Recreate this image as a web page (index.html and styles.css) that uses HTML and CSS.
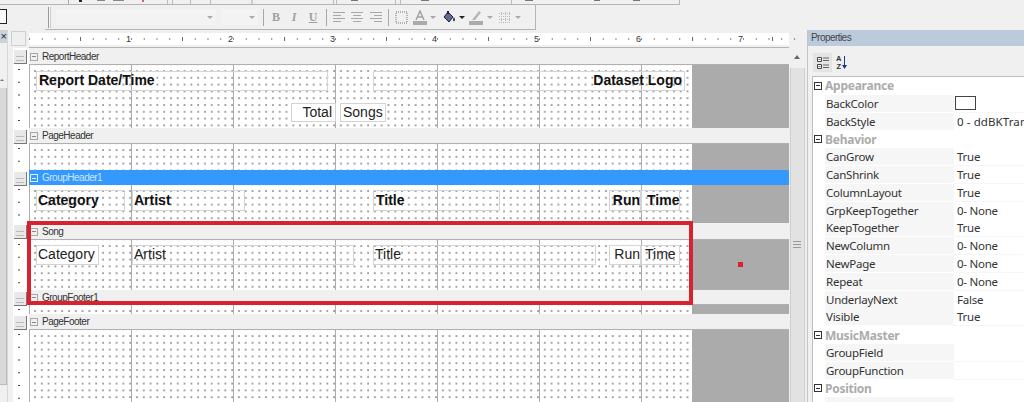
FILE: index.html
```html
<!DOCTYPE html>
<html lang="en">
<head>
<meta charset="utf-8">
<title>Report Designer</title>
<link rel="stylesheet" href="styles.css">
</head>
<body>
<div class="app">
  <div class="strip">
    <svg class="strip-marks" width="680" height="5" viewBox="0 0 680 5"><path d="M68.500 0v4M252 0v4" stroke="#aaa"/><path d="M79 0h3v2h-3z" fill="#223"/><path d="M97 0h8v1h-8zM113 0h11v1h-11z" fill="#888"/><path d="M142 0h2v2h-2z" fill="#c66"/><path d="M167.500 0v4M172.500 0v4M190.500 0v4M210.500 0v4M333.500 0v4M336.500 0v4M395.500 0v4M400.500 0v4M511.500 0v4" stroke="#bbb"/><path d="M351 0h7v1h-7zM421 0h8v1h-8zM525 0h8v1h-8zM594 0h6v1h-6zM633 0h7v1h-7z" fill="#777"/></svg>
  </div>
  <div class="tools">
    <div class="edge"><span class="edge-box"></span></div>
    <div class="toolbar">
      <span class="grip"></span>
      <span class="combo font-combo"><i class="arrow"></i></span>
      <span class="combo size-combo"><i class="arrow"></i></span>
      <span class="sep"></span>
      <span class="tb tb-b">B</span><span class="tb tb-i">I</span><span class="tb tb-u">U</span>
      <span class="sep sep-b"></span>
      <svg class="ic al-1" width="14" height="12" viewBox="0 0 14 12"><path d="M1 1.500h12M1 4.500h8M1 7.500h12M1 10.500h8" stroke="#a8a8a8"/></svg>
      <svg class="ic al-2" width="14" height="12" viewBox="0 0 14 12"><path d="M1 1.500h12M3 4.500h8M1 7.500h12M3 10.500h8" stroke="#a8a8a8"/></svg>
      <svg class="ic al-3" width="14" height="12" viewBox="0 0 14 12"><path d="M1 1.500h12M5 4.500h8M1 7.500h12M5 10.500h8" stroke="#a8a8a8"/></svg>
      <span class="sep sep-c"></span>
      <svg class="ic ic-bd" width="13" height="13" viewBox="0 0 13 13"><rect x="1" y="1" width="11" height="11" fill="none" stroke="#777" stroke-dasharray="1 1"/></svg>
      <svg class="ic ic-a" width="14" height="15" viewBox="0 0 14 15"><path d="M3 10 7 1l4 9M4.500 7h5" fill="none" stroke="#a0a0a0" stroke-width="1.400"/><rect y="11" width="14" height="4" fill="#aaa"/></svg>
      <i class="arrow ar"></i>
      <svg class="ic ic-f" width="13" height="13" viewBox="0 0 13 13"><path d="M1 6 5 1l5 5-4 5z" fill="#5d6c92" stroke="#223"/><path d="M4 0h2v3H4z" fill="#223"/><path d="M11 6q2 3 0 4.500-2-1.500 0-4.500" fill="#333"/></svg>
      <i class="arrow ar dark"></i>
      <svg class="ic ic-p" width="14" height="15" viewBox="0 0 14 15"><path d="M3 10 10 1l2 1.500L6 10z" fill="#b5b5b5"/><rect y="11" width="14" height="4" fill="#aaa"/></svg>
      <i class="arrow ar ar-p"></i>
      <svg class="ic ic-t" width="12" height="11" viewBox="0 0 12 11"><path d="M0 1.500h12M0 4.500h12M0 7.500h12M0 10.500h12M2.500 0v11M6.500 0v11M10.500 0v11" stroke="#bbb" stroke-dasharray="1 1"/></svg>
      <i class="arrow ar ar-t"></i>
    </div>
  </div>
  <div class="work">
    <div class="side">
      <span class="side-close">×</span>
      <span class="side-up"></span>
      <span class="side-thumb"></span>
    </div>
    <div class="designer">
      <div class="ruler-row">
        <span class="corner"></span>
        <div class="ruler">
          <span class="inch">1</span><span class="inch">2</span><span class="inch">3</span><span class="inch">4</span><span class="inch">5</span><span class="inch">6</span><span class="inch">7</span><span class="inch inch-last"></span>
        </div>
      </div>
      <div class="gap-row"></div>

      <section class="sec">
        <div class="bar h17"><span class="handle"></span><div class="bar-in"><span class="minus"></span>ReportHeader</div></div>
        <div class="body h63"><span class="vr"></span><div class="paper">
          <div class="ctl rh-a bold">Report Date/Time</div>
          <div class="ctl rh-b bold right">Dataset Logo</div>
          <div class="ctl rh-c white right">Total</div>
          <div class="ctl rh-d white">Songs</div>
        </div><div class="gray"></div></div>
      </section>

      <section class="sec">
        <div class="bar h16"><span class="handle"></span><div class="bar-in"><span class="minus"></span>PageHeader</div></div>
        <div class="body h26"><span class="vr"></span><div class="paper"></div><div class="gray"></div></div>
      </section>

      <section class="sec">
        <div class="bar h15"><span class="handle"></span><div class="bar-in selected"><span class="minus minus-on"></span>GroupHeader1</div></div>
        <div class="body h38"><span class="vr"></span><div class="paper">
          <div class="ctl gh-a bold">Category</div>
          <div class="ctl gh-b bold">Artist</div>
          <div class="ctl gh-c bold">Title</div>
          <div class="ctl gh-d bold right">Run</div>
          <div class="ctl gh-e bold">Time</div>
        </div><div class="gray"></div></div>
      </section>

      <section class="sec">
        <div class="bar h17"><span class="handle"></span><div class="bar-in"><span class="minus"></span>Song</div></div>
        <div class="body h50"><span class="vr"></span><div class="paper">
          <div class="ctl so-a white">Category</div>
          <div class="ctl so-b">Artist</div>
          <div class="ctl so-c">Title</div>
          <div class="ctl so-d white right">Run</div>
          <div class="ctl so-e">Time</div>
        </div><div class="gray"><span class="red-dot"></span></div></div>
      </section>

      <section class="sec">
        <div class="bar h15"><span class="handle"></span><div class="bar-in"><span class="minus"></span>GroupFooter1</div></div>
        <div class="body h9"><span class="vr"></span><div class="paper"></div><div class="gray"></div></div>
      </section>

      <section class="sec">
        <div class="bar h16"><span class="handle"></span><div class="bar-in"><span class="minus"></span>PageFooter</div></div>
        <div class="body h72"><span class="vr"></span><div class="paper"></div><div class="gray"></div></div>
      </section>

      <div class="highlight"></div>
    </div>
    <div class="vscroll">
      <span class="v-up"></span>
      <span class="v-thumb"></span>
      <span class="v-grip"></span>
    </div>
    <div class="props">
      <div class="props-title">Properties</div>
      <div class="props-tools">
        <span class="pt pt-on"><svg width="14" height="14" viewBox="0 0 14 14"><path d="M1.500 1.500h4v4h-4zM1.500 8.500h4v4h-4z" fill="#fff" stroke="#444"/><path d="M2.500 3.500h2M2.500 10.500h2M7 2h6M7 4.500h6M7 9h6M7 11.500h6" stroke="#666"/></svg></span>
        <span class="pt pt-az"><span class="az">A<br>Z</span><svg width="5" height="14" viewBox="0 0 5 14"><path d="M2.500 0v11" stroke="#1e3a7a"/><path d="M0 9h5l-2.500 4z" fill="#1e3a7a"/></svg></span>
      </div>
      <div class="grid">
        <div class="cat"><span class="box"></span>Appearance</div>
        <div class="row"><span class="k">BackColor</span><span class="v"><i class="swatch"></i></span></div>
        <div class="row"><span class="k">BackStyle</span><span class="v wide">0 - ddBKTransparent</span></div>
        <div class="cat"><span class="box"></span>Behavior</div>
        <div class="row"><span class="k">CanGrow</span><span class="v">True</span></div>
        <div class="row"><span class="k">CanShrink</span><span class="v">True</span></div>
        <div class="row"><span class="k">ColumnLayout</span><span class="v">True</span></div>
        <div class="row"><span class="k">GrpKeepTogether</span><span class="v">0- None</span></div>
        <div class="row"><span class="k">KeepTogether</span><span class="v">True</span></div>
        <div class="row"><span class="k">NewColumn</span><span class="v">0- None</span></div>
        <div class="row"><span class="k">NewPage</span><span class="v">0- None</span></div>
        <div class="row"><span class="k">Repeat</span><span class="v">0- None</span></div>
        <div class="row"><span class="k">UnderlayNext</span><span class="v">False</span></div>
        <div class="row"><span class="k">Visible</span><span class="v">True</span></div>
        <div class="cat"><span class="box"></span>MusicMaster</div>
        <div class="row"><span class="k">GroupField</span><span class="v"></span></div>
        <div class="row"><span class="k">GroupFunction</span><span class="v"></span></div>
        <div class="cat"><span class="box"></span>Position</div>
        <div class="row"><span class="k">Left</span><span class="v"></span></div>
      </div>
    </div>
  </div>
</div>
</body>
</html>
```
FILE: styles.css
```css
* { box-sizing: border-box; }
html, body { margin: 0; padding: 0; background: #f0f0f0; }
.app { width: 1024px; height: 402px; overflow: hidden; position: relative; display: flex; flex-direction: column; font-family: "Liberation Sans", Arial, sans-serif; color: #222; }

/* top toolbars */
.strip { height: 5px; flex: none; width: 680px; border-bottom: 1px solid #b5b5b5; border-right: 1px solid #b5b5b5; overflow: hidden; }
.strip-marks { display: block; }
.tools { height: 25px; flex: none; display: flex; }
.edge { width: 45px; flex: none; }
.edge-box { display: block; width: 7px; height: 15px; margin-top: 4px; border: 1px solid #222; border-left: 0; background: #fafafa; }
.toolbar { width: 491px; flex: none; display: flex; align-items: center; border-right: 1px solid #b5b5b5; border-bottom: 1px solid #b5b5b5; padding-left: 3px; }
.grip { width: 3px; height: 21px; flex: none; border-left: 1px solid #999; border-right: 1px solid #ccc; background: #f8f8f8; margin-right: 5px; }
.combo { height: 16px; flex: none; background: #f3f3f3; display: flex; align-items: center; justify-content: flex-end; padding-right: 3px; }
.font-combo { width: 160px; }
.size-combo { width: 37px; margin-left: 5px; }
.arrow { display: block; flex: none; width: 0; height: 0; border: 3px solid transparent; border-top: 3px solid #aaa; border-bottom: 0; }
.sep { width: 1px; height: 17px; flex: none; background: #a8a8a8; margin-left: 5px; }
.tb { width: 10px; flex: none; font: bold 12px "Liberation Serif", serif; color: #a0a0a0; text-align: center; }
.tb-b { margin-left: 7px; }
.tb-i { margin-left: 8px; font-style: italic; }
.tb-u { margin-left: 9px; text-decoration: underline; }
.sep-b { margin-left: 8px; }
.ic { display: block; flex: none; }
.al-1 { margin-left: 5px; }
.al-2 { margin-left: 4px; }
.al-3 { margin-left: 5px; }
.sep-c { margin-left: 5px; }
.ic-bd { margin-left: 6px; }
.ic-a { margin-left: 5px; }
.ar { margin-left: 3px; }
.dark { border-top-color: #222; }
.ic-f { margin-left: 7px; }
.ic-p { margin-left: 4px; }
.ar-p { margin-left: 4px; }
.ic-t { margin-left: 6px; }
.ar-t { margin-left: 4px; }

/* workspace */
.work { flex: 1; display: flex; min-height: 0; }
.side { width: 8px; flex: none; position: relative; border-right: 1px solid #d8d8d8; }
.side-close { display: block; width: 7px; height: 13px; background: #c9d3de; font: 11px/12px "Liberation Sans", sans-serif; color: #222; text-align: right; }
.side-up { position: absolute; left: 0; top: 47px; border: 2px solid transparent; border-bottom: 2px solid #777; }
.side-thumb { position: absolute; left: 0; top: 58px; width: 7px; height: 297px; background: #d9d9d9; border-right: 1px solid #bbb; border-bottom: 1px solid #bbb; }
.designer { width: 781px; flex: none; position: relative; }

/* ruler */
.ruler-row { height: 15px; display: flex; padding-left: 3px; }
.corner { width: 15px; height: 15px; margin-top: 1px; background: #efefef; border: 1px solid #cfcfcf; }
.ruler { margin-left: 3px; margin-top: 3px; height: 12px; width: 760px; background: #fff; display: flex; }
.inch { width: 102px; flex: none; font: 9px/12px "Liberation Sans", sans-serif; color: #333; text-align: right;
  background:
    linear-gradient(#666, #666) 50% 50% / 1px 4px no-repeat,
    linear-gradient(to right, #888 1px, transparent 1px) 0 50% / 12.750px 2px repeat-x;
}
.inch-last { width: 58px; }
.gap-row { height: 3px; border-bottom: 1px solid #b5b5b5; margin-left: 21px; }

/* bands */
.bar { display: flex; }
.h17 { height: 17px; } .h16 { height: 16px; } .h15 { height: 15px; }
.h63 { height: 63px; } .h26 { height: 26px; } .h38 { height: 38px; } .h50 { height: 50px; } .h9 { height: 9px; } .h72 { height: 72px; }
.handle { width: 21px; flex: none; position: relative; background: linear-gradient(to right, transparent 5px, #fff 5px); }
.handle::after { content: ""; position: absolute; left: 6px; top: 2px; width: 12px; height: 13px; background: repeating-linear-gradient(#e8e8e8 0 3px, #bbb 3px 4px) 2px 3px / 8px 8px no-repeat, #e8e8e8; border-right: 1px solid #777; border-bottom: 1px solid #777; }
.bar-in { flex: 1; background: #f0f0f0; font: 10px/16px "Liberation Sans", sans-serif; letter-spacing: -.5px; color: #333; border-bottom: 1px solid #b0b0b0; display: flex; align-items: center; padding-top: 1px; }
.bar-in.selected { background: #3399ff; color: #cfe5ff; border-bottom: 0; }
.minus { width: 8px; height: 8px; margin: 0 4px 0 1px; border: 1px solid #a8a8a8; background: linear-gradient(#888, #888) 50% 50% / 4px 1px no-repeat; flex: none; }
.minus-on { border-color: #e4f0ff; background: linear-gradient(#e4f0ff, #e4f0ff) 50% 50% / 4px 1px no-repeat; }
.body { display: flex; }
.vr { width: 21px; flex: none;
  background:
    linear-gradient(#444 1px, transparent 1px) 10px 4px / 2px 12.750px repeat-y,
    linear-gradient(to right, transparent 5px, #fff 5px);
}
.paper { width: 663px; flex: none; position: relative; overflow: hidden;
  background:
    linear-gradient(to right, #acacac 1.500px, transparent 1.500px) 0 0 / 102px 100% repeat-x,
    radial-gradient(circle at 1px 1px, #777 .55px, transparent .95px) 5px 5px / 6.800px 6.800px,
    #fff;
}
.gray { flex: 1; background: #ababab; position: relative; }
.red-dot { position: absolute; left: 46px; top: 22px; width: 5px; height: 5px; background: #d8232e; }

/* report controls on the free canvas of a band */
.ctl { position: absolute; border: 1px solid #d4d4d4; font-size: 14px; line-height: 17px; color: #222; white-space: nowrap; padding-left: 1px; }
.bold { font-weight: bold; color: #111; }
.right { text-align: right; padding-right: 2px; padding-left: 0; }
.white { background: #fff; }
.rh-a { left: 7px; top: 6px; width: 292px; height: 20px; padding-left: 2px; }
.rh-b { left: 344px; top: 6px; width: 312px; height: 20px; }
.rh-c { left: 262px; top: 38px; width: 45px; height: 19px; padding-right: 3px; }
.rh-d { left: 311px; top: 38px; width: 46px; height: 19px; padding-left: 2px; }
.gh-a { left: 7px; top: 5px; width: 89px; height: 21px; line-height: 19px; }
.gh-b { left: 103px; top: 5px; width: 113px; height: 21px; line-height: 19px; }
.gh-c { left: 344px; top: 5px; width: 127px; height: 21px; padding-left: 2px; line-height: 19px; }
.gh-d { left: 580px; top: 5px; width: 32px; height: 21px; line-height: 19px; padding-right: 0; }
.gh-e { left: 612px; top: 5px; width: 39px; height: 21px; padding-left: 5px; line-height: 19px; }
.so-a { left: 7px; top: 5px; width: 63px; height: 20px; padding-left: 1px; }
.so-b { left: 103px; top: 5px; width: 222px; height: 20px; }
.so-c { left: 344px; top: 5px; width: 223px; height: 20px; padding-left: 1px; }
.so-d { left: 580px; top: 5px; width: 32px; height: 20px; padding-right: 0; }
.so-e { left: 612px; top: 5px; width: 39px; height: 20px; padding-left: 3px; }

.highlight { position: absolute; left: 19px; top: 191px; width: 666px; height: 84px; border: 4px solid #d8232e; }

/* vertical scrollbar */
.vscroll { width: 19px; flex: none; position: relative; border-right: 1px solid #c4c4c4; }
.v-up { position: absolute; left: 5px; top: 25px; border: 3px solid transparent; border-bottom: 4px solid #666; border-top: 0; }
.v-thumb { position: absolute; left: 1px; top: 38px; width: 15px; height: 340px; background: #e2e2e2; border-left: 1px solid #cfcfcf; border-right: 1px solid #cfcfcf; }
.v-grip { position: absolute; left: 4px; top: 211px; width: 8px; height: 9px; background: repeating-linear-gradient(#999 0 1px, transparent 1px 3px); }

/* properties */
.props { flex: 1; min-width: 0; }
.props-title { height: 16px; background: #bccbd9; font: 10px/15px "Liberation Sans", sans-serif; letter-spacing: -.55px; color: #445; padding-left: 3px; }
.props-tools { height: 30px; padding: 7px 0 0 5px; display: flex; gap: 4px; }
.pt { height: 19px; display: flex; align-items: center; }
.pt-on { width: 19px; background: #e4e4e4; justify-content: center; }
.pt-az { gap: 1px; }
.az { font: bold 7.500px/7.500px "Liberation Sans", sans-serif; color: #333; text-align: center; }
.grid { margin-left: 4px; background: #fff; border-left: 1px solid #bdbdbd; border-top: 1px solid #bdbdbd; height: 326px; font: 11.500px/17px "Noto Sans", "Liberation Sans", sans-serif; letter-spacing: -.25px; color: #333; }
.cat { height: 17.800px; display: flex; align-items: center; font-weight: bold; font-size: 12px; color: #ababab; white-space: nowrap; background: #fff; padding-left: 1px; }
.box { width: 8px; height: 8px; margin-right: 3px; border: 1px solid #333; background: linear-gradient(#333, #333) 50% 50% / 4px 1px no-repeat; flex: none; }
.row { height: 17.800px; display: grid; grid-template-columns: 129px 1fr; margin-left: 12px; white-space: nowrap; overflow: hidden; }
.k { background: #f6f6f6; padding-left: 1px; border-bottom: 1px solid #fff; }
.v { padding-left: 3px; border-bottom: 1px solid #f6f6f6; }
.wide { letter-spacing: .1px; }
.swatch { display: block; width: 21px; height: 14px; margin: 1px 0 0 -2px; border: 1px solid #444; background: #fff; }
```
